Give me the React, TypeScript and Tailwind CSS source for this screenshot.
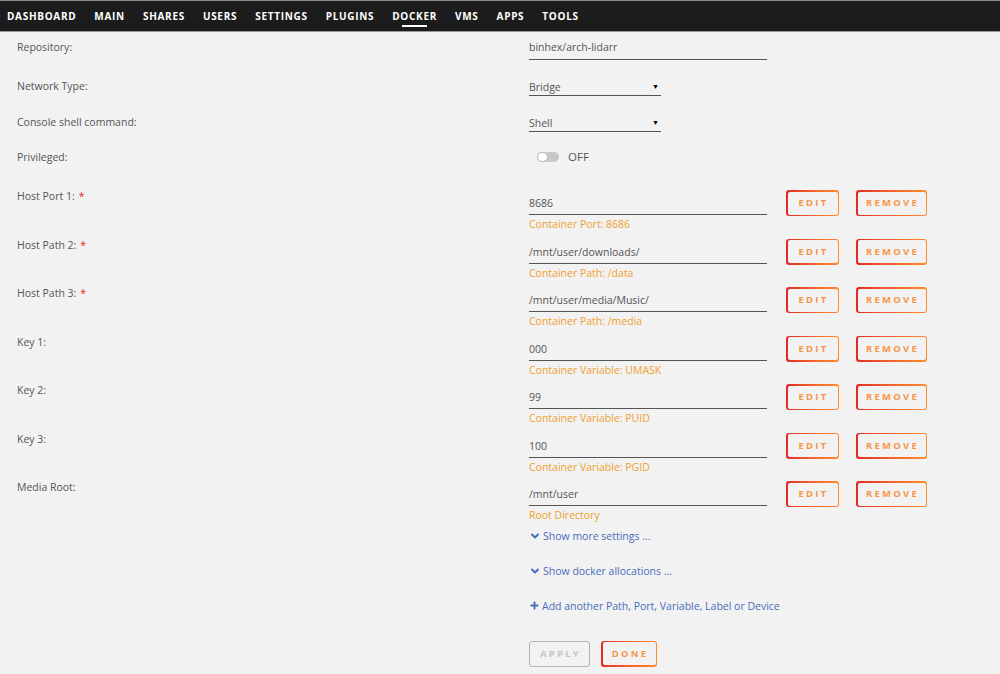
import { ChevronDown, Plus } from 'lucide-react';

const navItems = ['DASHBOARD', 'MAIN', 'SHARES', 'USERS', 'SETTINGS', 'PLUGINS', 'DOCKER', 'VMS', 'APPS', 'TOOLS'];

const mappings = [
  { label: 'Host Port 1:', required: true, value: '8686', hint: 'Container Port: 8686' },
  { label: 'Host Path 2:', required: true, value: '/mnt/user/downloads/', hint: 'Container Path: /data' },
  { label: 'Host Path 3:', required: true, value: '/mnt/user/media/Music/', hint: 'Container Path: /media' },
  { label: 'Key 1:', required: false, value: '000', hint: 'Container Variable: UMASK' },
  { label: 'Key 2:', required: false, value: '99', hint: 'Container Variable: PUID' },
  { label: 'Key 3:', required: false, value: '100', hint: 'Container Variable: PGID' },
  { label: 'Media Root:', required: false, value: '/mnt/user', hint: 'Root Directory' },
];

function GradientButton({ text, width }: { text: string; width: string }) {
  return (
    <div className={`${width} h-[26px] rounded-[3px] p-[1.5px] bg-gradient-to-r from-[#e22828] to-[#ff8c2f]`}>
      <div className="w-full h-full rounded-[2px] bg-[#f2f2f2] flex items-center justify-center">
        <span className="text-[9.5px] font-bold tracking-[2.2px] text-[#f7954a] pl-[2px]">{text}</span>
      </div>
    </div>
  );
}

function Select({ value }: { value: string }) {
  return (
    <div className="w-[132px] h-[18px] border-b border-[#555] flex items-center justify-between pr-[2px] text-[#555]">
      <span>{value}</span>
      <span className="text-[7px] text-black">▼</span>
    </div>
  );
}

export default function App() {
  return (
    <div className="w-[1000px] h-[674px] overflow-hidden bg-[#f2f2f2] font-['Open_Sans',sans-serif]">
      {/* top nav */}
      <div className="h-[32px] bg-[#1c1c1c] border-t border-[#8a8a8a] border-b-[1.5px] border-b-[#9a9a9a] flex items-center pl-[7px] pb-[3px] gap-[18px]">
        {navItems.map((item) => (
          <div key={item} className="relative leading-[14px]">
            <span className="text-[10px] font-bold tracking-[0.7px] text-white">{item}</span>
            {item === 'DOCKER' && (
              <div className="absolute left-[10px] right-[10px] -bottom-[4px] h-[2px] bg-white" />
            )}
          </div>
        ))}
      </div>

      <div className="pl-[17px] pt-[7px] text-[10.5px] text-[#555] leading-[16px]">
        {/* repository */}
        <div className="flex h-[39px]">
          <div className="w-[512px]">Repository:</div>
          <div className="w-[238px] h-[21px] border-b border-[#555]">binhex/arch-lidarr</div>
        </div>

        <div className="flex h-[36px]">
          <div className="w-[512px]">Network Type:</div>
          <Select value="Bridge" />
        </div>

        <div className="flex h-[35px]">
          <div className="w-[512px]">Console shell command:</div>
          <Select value="Shell" />
        </div>

        <div className="flex h-[39px]">
          <div className="w-[512px]">Privileged:</div>
          <div className="flex items-center h-[16px] pl-[8px] gap-[9px]">
            <div className="w-[22px] h-[10px] rounded-full bg-[#c8c8c8] flex items-center">
              <div className="w-[11px] h-[10px] rounded-full bg-white border border-[#bbb]" />
            </div>
            <span className="text-[11.5px] text-[#555]">OFF</span>
          </div>
        </div>

        {mappings.map((m) => (
          <div key={m.label} className="flex h-[48.5px]">
            <div className="w-[512px]">
              {m.label}
              {m.required && <span className="text-[#e22828] ml-[4px]">*</span>}
            </div>
            <div className="w-[238px]">
              <div className="pt-[7px] pb-[3px] border-b border-[#555]">{m.value}</div>
              <div className="text-[#f0a02c] mt-[1px]">{m.hint}</div>
            </div>
            <div className="flex gap-[17px] ml-[19px] pt-[2px]">
              <GradientButton text="EDIT" width="w-[53px]" />
              <GradientButton text="REMOVE" width="w-[71px]" />
            </div>
          </div>
        ))}

        {/* links */}
        <div className="pl-[512px] text-[#486dba]">
          <div className="h-[35px] flex items-start gap-[2px]">
            <ChevronDown size={12} strokeWidth={4} className="mt-[2px]" />
            <span>Show more settings ...</span>
          </div>
          <div className="h-[35px] flex items-start gap-[2px]">
            <ChevronDown size={12} strokeWidth={4} className="mt-[2px]" />
            <span>Show docker allocations ...</span>
          </div>
          <div className="h-[43px] flex items-start gap-[2px]">
            <Plus size={11} strokeWidth={4} className="mt-[2px]" />
            <span>Add another Path, Port, Variable, Label or Device</span>
          </div>
          <div className="flex gap-[11px]">
            <div className="w-[61px] h-[26px] rounded-[3px] border-[1.5px] border-[#b4b4b4] flex items-center justify-center">
              <span className="text-[9.5px] font-bold tracking-[2.2px] text-[#c4c4c4] pl-[2px]">APPLY</span>
            </div>
            <GradientButton text="DONE" width="w-[56px]" />
          </div>
        </div>
      </div>
    </div>
  );
}
